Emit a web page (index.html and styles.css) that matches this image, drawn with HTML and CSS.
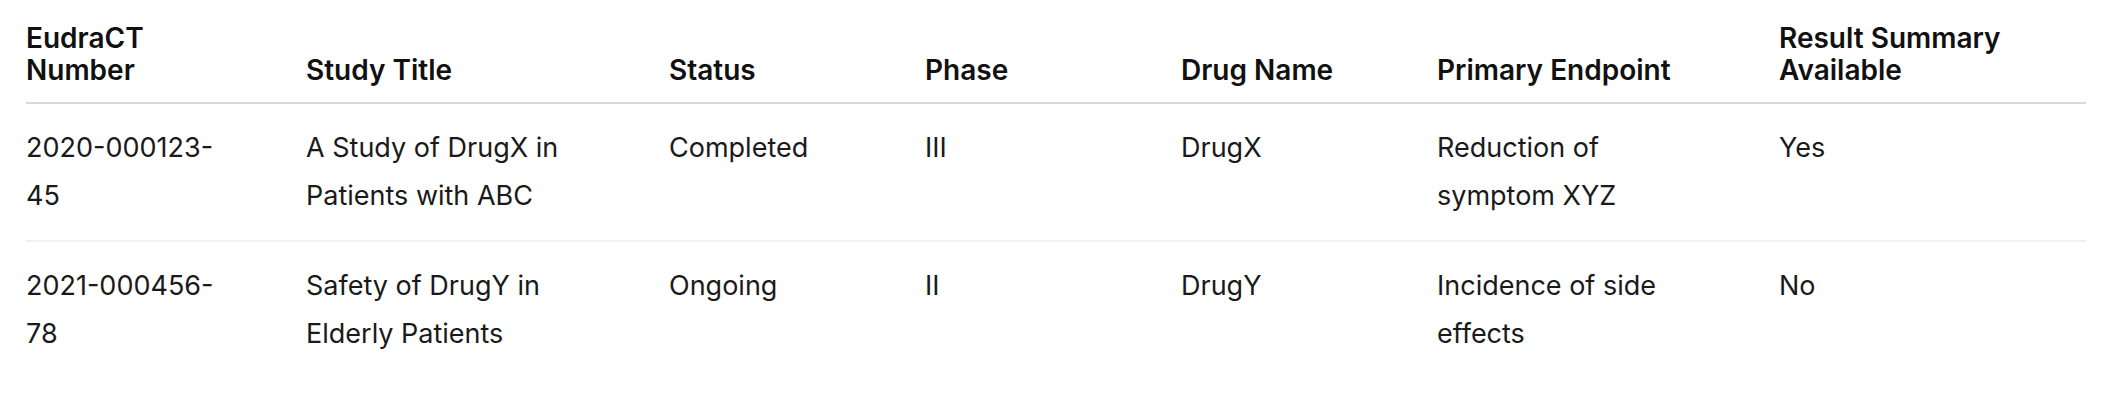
FILE: index.html
```html
<!DOCTYPE html>
<html lang="en">
<head>
<meta charset="utf-8">
<title>EudraCT Trials</title>
<link rel="stylesheet" href="styles.css">
</head>
<body>
<div class="page">
  <table class="trials">
    <colgroup>
      <col class="c1"><col class="c2"><col class="c3"><col class="c4"><col class="c5"><col class="c6"><col class="c7">
    </colgroup>
    <thead>
      <tr>
        <th>EudraCT Number</th>
        <th>Study Title</th>
        <th>Status</th>
        <th>Phase</th>
        <th>Drug Name</th>
        <th>Primary Endpoint</th>
        <th>Result Summary Available</th>
      </tr>
    </thead>
    <tbody>
      <tr>
        <td>2020-000123-45</td>
        <td>A Study of DrugX in Patients with ABC</td>
        <td>Completed</td>
        <td>III</td>
        <td>DrugX</td>
        <td>Reduction of symptom XYZ</td>
        <td>Yes</td>
      </tr>
      <tr>
        <td>2021-000456-78</td>
        <td>Safety of DrugY in Elderly Patients</td>
        <td>Ongoing</td>
        <td>II</td>
        <td>DrugY</td>
        <td>Incidence of side effects</td>
        <td>No</td>
      </tr>
    </tbody>
  </table>
</div>
</body>
</html>
```

FILE: styles.css
```css
html, body {
  margin: 0;
  padding: 0;
  background: #ffffff;
}

.page {
  padding: 22px 26px 0 26px;
  font-family: Inter, "Liberation Sans", sans-serif;
  color: #111111;
}

.trials {
  width: 100%;
  border-collapse: collapse;
  table-layout: fixed;
}

.c1 { width: 280px; }
.c2 { width: 363px; }
.c3 { width: 256px; }
.c4 { width: 256px; }
.c5 { width: 256px; }
.c6 { width: 342px; }
.c7 { width: auto; }

.trials th {
  text-align: left;
  vertical-align: bottom;
  font-size: 28px;
  font-weight: 600;
  line-height: 32px;
  padding: 0 64px 16px 0;
  border-bottom: 2px solid #d9d9d9;
  color: #111111;
}

.trials td {
  text-align: left;
  vertical-align: top;
  font-size: 27px;
  font-weight: 400;
  line-height: 48px;
  padding: 20px 64px 20px 0;
  color: #1a1a1a;
}

.trials tbody tr:not(:last-child) td {
  border-bottom: 2px solid #f1f1f1;
}
```
